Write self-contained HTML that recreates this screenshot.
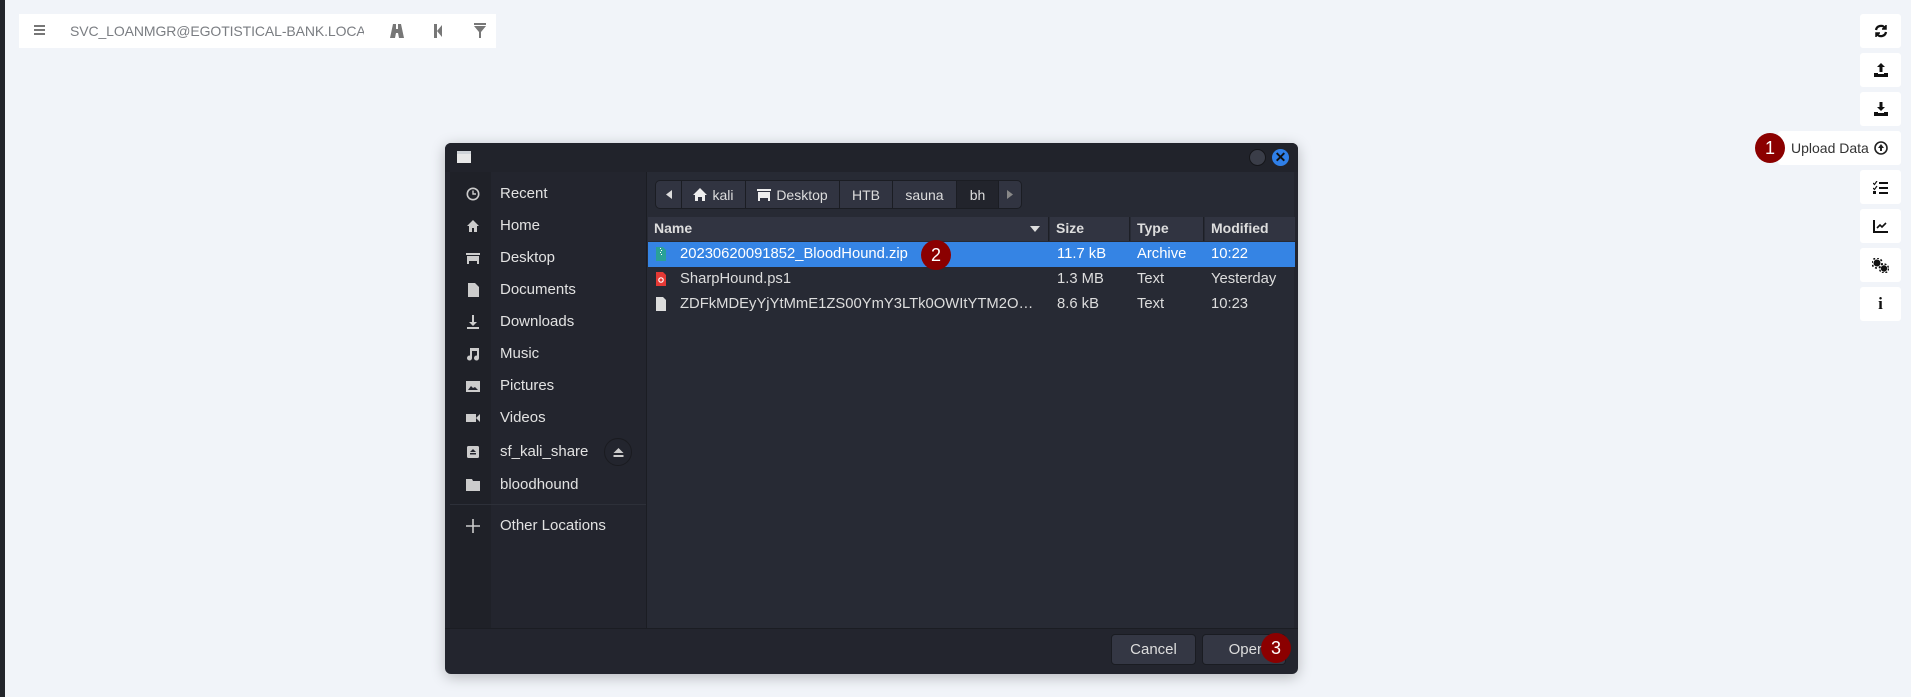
<!DOCTYPE html>
<html><head><meta charset="utf-8"><style>
*{box-sizing:border-box;margin:0;padding:0}
body{width:1911px;height:697px;background:#f1f4f9;position:relative;overflow:hidden;font-family:"Liberation Sans",sans-serif}
.abs{position:absolute}
.strip{left:0;top:0;width:5px;height:697px;background:#22252b}
.tb{left:19px;top:14px;width:477px;height:34px;background:#fff}
.tb .t{left:51px;top:9px;font-size:14px;color:#7a7d82;letter-spacing:-0.1px;white-space:nowrap;width:294px;overflow:hidden}
.rb{left:1860px;width:41px;height:34px;background:#fff;border-radius:3px;display:flex;align-items:center;justify-content:center}
.badge{width:30px;height:30px;border-radius:50%;background:#8b0000;color:#fff;font-size:18px;display:flex;align-items:center;justify-content:center}
.dlg{left:445px;top:143px;width:853px;height:531px;background:#23252e;border-radius:6px;box-shadow:0 3px 14px rgba(0,0,0,.25);overflow:hidden;font-size:15px;color:#e6e6e6}
.hdr{left:0;top:0;width:853px;height:29px;background:#21232b}
.side1{left:5px;top:29px;width:41px;height:456px;background:#1f2128}
.side2{left:46px;top:29px;width:155px;height:456px;background:#23252e}
.item{left:0;width:200px;height:30px}
.item .lab{position:absolute;left:50px;top:6px;color:#e2e2e2}
.item .ic{position:absolute;left:16px;top:8px;width:14px;height:14px}
.main{left:201px;top:29px;width:648px;height:456px;background:#272a34;border-left:1px solid #1b1d23}
.pb{top:8px;height:29px;background:#313441;border:1px solid #1b1d23;color:#ddd;font-size:14px;display:flex;align-items:center;justify-content:center}
.colh{top:45px;height:24px;background:#313441;font-weight:bold;color:#ddd;font-size:14px;padding:3px 0 0 6px;border-right:1px solid #1d1f26}
.row{left:1px;width:647px;height:25px;font-size:14.8px;color:#ddd}
.row span{position:absolute;top:4px;white-space:nowrap}
.btn{top:491px;height:31px;background:#343744;border:1px solid #1a1c22;border-radius:4px;color:#ddd;font-size:15px;display:flex;align-items:center;justify-content:center}
</style></head><body>
<div class="abs strip"></div>
<div class="abs tb">
 <div class="abs" style="left:15px;top:11px;width:11px;height:2px;background:#777;box-shadow:0 4px 0 #777,0 8px 0 #777"></div>
 <div class="abs t">SVC_LOANMGR@EGOTISTICAL-BANK.LOCAL</div>
 <svg class="abs" style="left:371px;top:10px" width="14" height="14" viewBox="0 0 14 14"><path d="M3 0h3v5h2V0h3l3 14H9L8 9H6L5 14H0z" fill="#777"/></svg>
 <svg class="abs" style="left:414px;top:10px" width="10" height="14" viewBox="0 0 10 14"><path d="M1 0h3v14H1zM4 7l5-6v12z" fill="#777"/></svg>
 <svg class="abs" style="left:455px;top:9px" width="12" height="15" viewBox="0 0 12 15"><path d="M0 0h12v2H0zM0 3h12L7 9v6H5V9z" fill="#777"/></svg>
</div>

<div class="abs rb" style="top:14px"><svg width="14" height="14" viewBox="0 0 14 14" fill="none" stroke="#111" stroke-width="2.3"><path d="M2 6a5 5 0 0 1 9-2M12 8a5 5 0 0 1-9 2"/><path d="M12 1v4H8M2 13V9h4" fill="#111" stroke-width="1.5"/></svg></div>
<div class="abs rb" style="top:53px"><svg width="14" height="14" viewBox="0 0 14 14"><path d="M7 0l4 4H8.5v5h-3V4H3z M0 10h4v1h6v-1h4v4H0z" fill="#111"/></svg></div>
<div class="abs rb" style="top:92px"><svg width="14" height="14" viewBox="0 0 14 14"><path d="M5.5 0h3v5H11L7 9 3 5h2.5z M0 10h4v1h6v-1h4v4H0z" fill="#111"/></svg></div>
<div class="abs rb" style="top:131px;left:1778px;width:123px;justify-content:flex-start;padding-left:13px;font-size:14px;color:#333">Upload Data <svg style="margin-left:5px" width="14" height="14" viewBox="0 0 14 14"><circle cx="7" cy="7" r="6" fill="none" stroke="#222" stroke-width="1.6"/><path d="M7 3l3 4H8v3H6V7H4z" fill="#222"/></svg></div>
<div class="abs badge" style="left:1755px;top:133px">1</div>
<div class="abs rb" style="top:170px"><svg width="15" height="13" viewBox="0 0 15 13"><path d="M0 2l1.5 1.5L4 0M0 7l1.5 1.5L4 5" fill="none" stroke="#111" stroke-width="1.2"/><rect x="0" y="10" width="3" height="3" fill="#111"/><path d="M6 1h9v2H6zM6 6h9v2H6zM6 11h9v2H6z" fill="#111"/></svg></div>
<div class="abs rb" style="top:209px"><svg width="15" height="13" viewBox="0 0 15 13" fill="none" stroke="#111" stroke-width="2"><path d="M1 0v12h14"/><path d="M4 8l3-3 2 2 4-4" stroke-width="1.6"/></svg></div>
<div class="abs rb" style="top:248px"><svg width="17" height="15" viewBox="0 0 17 15"><circle cx="5" cy="5" r="3.5" fill="#111"/><circle cx="5" cy="5" r="5" fill="none" stroke="#111" stroke-width="1.6" stroke-dasharray="2 1.9"/><circle cx="12" cy="10.5" r="3.2" fill="#111"/><circle cx="12" cy="10.5" r="4.5" fill="none" stroke="#111" stroke-width="1.4" stroke-dasharray="2 1.6"/></svg></div>
<div class="abs rb" style="top:287px;font-weight:bold;font-family:'Liberation Serif',serif;font-size:17px;color:#111">i</div>

<div class="abs dlg">
 <div class="abs hdr"></div>
 <div class="abs" style="left:12px;top:8px;width:14px;height:12px;background:#e8e8e8;border-top:3px solid #cfd3d8"></div>
 <div class="abs" style="left:804px;top:6px;width:17px;height:17px;border-radius:50%;background:#3a3d48;border:1px solid #15161a"></div>
 <div class="abs" style="left:827px;top:6px;width:17px;height:17px;border-radius:50%;background:#2f7fe8;color:#111;font-size:14px;font-weight:bold;text-align:center;line-height:17px">✕</div>
 <div class="abs side1"></div><div class="abs side2"></div>
 <div class="abs" style="left:5px;top:35px;width:196px;height:450px">
  <div class="abs item" style="top:1px"><svg class="ic" viewBox="0 0 14 14"><circle cx="7" cy="7" r="5.7" fill="none" stroke="#ccc" stroke-width="1.6"/><path d="M7 3.5V7h3" fill="none" stroke="#ccc" stroke-width="1.4"/></svg><span class="lab">Recent</span></div>
  <div class="abs item" style="top:33px"><svg class="ic" viewBox="0 0 14 14"><path d="M7 1l6 6h-2v6H8V9H6v4H3V7H1z" fill="#ccc"/></svg><span class="lab">Home</span></div>
  <div class="abs item" style="top:65px"><svg class="ic" viewBox="0 0 14 14"><path d="M0 2h14v2H0zM1 5h12v8h-2v-3H3v3H1z" fill="#ccc"/></svg><span class="lab">Desktop</span></div>
  <div class="abs item" style="top:97px"><svg class="ic" viewBox="0 0 14 14"><path d="M2 0h7l4 4v10H2z" fill="#ccc"/></svg><span class="lab">Documents</span></div>
  <div class="abs item" style="top:129px"><svg class="ic" viewBox="0 0 14 14"><path d="M6 0h2v7h3L7 11 3 7h3zM1 12h12v2H1z" fill="#ccc"/></svg><span class="lab">Downloads</span></div>
  <div class="abs item" style="top:161px"><svg class="ic" viewBox="0 0 14 14"><path d="M4 1h9v10a2.5 2.5 0 1 1-2-2.4V4H6v7a2.5 2.5 0 1 1-2-2.4z" fill="#ccc"/></svg><span class="lab">Music</span></div>
  <div class="abs item" style="top:193px"><svg class="ic" viewBox="0 0 14 14"><path d="M0 2h14v11H0z" fill="#ccc"/><path d="M2 11l3-4 2 2 2-1 3 3z" fill="#23252e"/></svg><span class="lab">Pictures</span></div>
  <div class="abs item" style="top:225px"><svg class="ic" viewBox="0 0 14 14"><path d="M0 3h10v8H0zM10 7l4-4v8z" fill="#ccc"/></svg><span class="lab">Videos</span></div>
  <div class="abs item" style="top:259px"><svg class="ic" viewBox="0 0 14 14"><rect x="1" y="1" width="12" height="12" rx="1.5" fill="#ccc"/><path d="M7 4l3 3H4zM4 8h6v1.5H4z" fill="#23252e"/></svg><span class="lab">sf_kali_share</span>
   <div class="abs" style="left:154px;top:1px;width:28px;height:28px;border-radius:50%;border:1px solid #1a1b20"><svg style="position:absolute;left:7px;top:7px" width="13" height="13" viewBox="0 0 13 13"><path d="M6.5 2l5 5h-10zM1.5 9h10v2h-10z" fill="#ccc"/></svg></div></div>
  <div class="abs item" style="top:292px"><svg class="ic" viewBox="0 0 14 14"><path d="M0 1h6l1 2h7v10H0z" fill="#ccc"/></svg><span class="lab">bloodhound</span></div>
  <div class="abs" style="left:0;top:326px;width:196px;height:1px;background:#2d3039"></div>
  <div class="abs item" style="top:333px"><svg class="ic" viewBox="0 0 14 14"><path d="M6.2 0h1.6v14H6.2zM0 6.2h14v1.6H0z" fill="#ccc"/></svg><span class="lab">Other Locations</span></div>
 </div>
 <div class="abs main">
  <div class="abs pb" style="left:8px;width:27px;border-radius:5px 0 0 5px"><svg width="6" height="9"><path d="M6 0v9L0 4.5z" fill="#ddd"/></svg></div>
  <div class="abs pb" style="left:34px;width:65px"><svg width="14" height="13" viewBox="0 0 14 13" style="margin-right:5px"><path d="M7 0l7 7h-2v6H9V9H5v4H2V7H0z" fill="#eee"/></svg>kali</div>
  <div class="abs pb" style="left:98px;width:95px"><svg width="14" height="13" viewBox="0 0 14 13" style="margin-right:5px"><path d="M0 1h14v2H0zM1 4h12v9h-2v-3H3v3H1z" fill="#eee"/></svg>Desktop</div>
  <div class="abs pb" style="left:192px;width:54px">HTB</div>
  <div class="abs pb" style="left:245px;width:65px">sauna</div>
  <div class="abs pb" style="left:309px;width:43px;background:#22242c">bh</div>
  <div class="abs pb" style="left:351px;width:24px;border-radius:0 5px 5px 0"><svg width="6" height="9"><path d="M0 0v9L6 4.5z" fill="#888"/></svg></div>
  <div class="abs colh" style="left:1px;width:401px">Name<svg style="position:absolute;right:8px;top:9px" width="10" height="6"><path d="M0 0h10L5 6z" fill="#ddd"/></svg></div>
  <div class="abs colh" style="left:403px;width:80px">Size</div>
  <div class="abs colh" style="left:484px;width:73px">Type</div>
  <div class="abs colh" style="left:558px;width:90px;border-right:none">Modified</div>
  <div class="abs row" style="top:70px;background:#3584e4;color:#fff"><svg style="position:absolute;left:8px;top:5px" width="10" height="14" viewBox="0 0 10 14"><path d="M0 0h7l3 3v11H0z" fill="#2aa198"/><path d="M4 1h1v1H4zM5 3h1v1H5zM4 5h1v1H4zM5 7h1v1H5z" fill="#fff"/></svg><span style="left:32px">20230620091852_BloodHound.zip</span><span style="left:409px">11.7 kB</span><span style="left:489px">Archive</span><span style="left:563px">10:22</span></div>
  <div class="abs row" style="top:95px"><svg style="position:absolute;left:8px;top:5px" width="10" height="14" viewBox="0 0 10 14"><path d="M0 0h7l3 3v11H0z" fill="#e53935"/><circle cx="5" cy="8" r="2.2" fill="none" stroke="#fff" stroke-width="1.2"/></svg><span style="left:32px">SharpHound.ps1</span><span style="left:409px">1.3 MB</span><span style="left:489px">Text</span><span style="left:563px">Yesterday</span></div>
  <div class="abs row" style="top:120px"><svg style="position:absolute;left:8px;top:5px" width="10" height="14" viewBox="0 0 10 14"><path d="M0 0h7l3 3v11H0z" fill="#ddd"/></svg><span style="left:32px;width:362px;overflow:hidden;text-overflow:ellipsis">ZDFkMDEyYjYtMmE1ZS00YmY3LTk0OWItYTM2OWxxxxxxx</span><span style="left:409px">8.6 kB</span><span style="left:489px">Text</span><span style="left:563px">10:23</span></div>
 </div>
 <div class="abs" style="left:0;top:485px;width:853px;height:1px;background:#1b1d23"></div>
 <div class="abs btn" style="left:666px;top:491px;width:85px">Cancel</div>
 <div class="abs btn" style="left:757px;top:491px;width:84px;padding-left:6px;padding-right:0">Open</div>
</div>
<div class="abs badge" style="left:921px;top:240px">2</div>
<div class="abs badge" style="left:1261px;top:633px">3</div>
</body></html>
